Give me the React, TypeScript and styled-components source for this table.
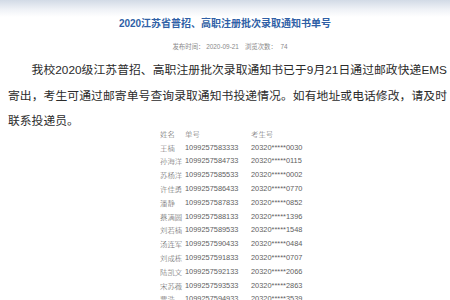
import React from 'react';
import styled, { createGlobalStyle } from 'styled-components';

const GlobalStyle = createGlobalStyle`
  html, body {
    margin: 0;
    padding: 0;
    background: #fff;
  }
  body {
    font-family: "Liberation Sans", "Noto Sans CJK SC", sans-serif;
    overflow: hidden;
  }
`;

const Page = styled.div`
  width: 450px;
  height: 300px;
  overflow: hidden;
  background: linear-gradient(to bottom, #d2dae6 0px, #eef1f6 9px, #ffffff 17px);
`;

const Title = styled.h1`
  margin: 0;
  padding-top: 17px;
  font-size: 10px;
  line-height: 14px;
  font-weight: bold;
  color: #2f5fa6;
  text-align: center;
`;

const Meta = styled.div`
  margin-top: 11px;
  font-size: 6.4px;
  line-height: 10px;
  color: #8a8a8a;
  text-align: center;
  padding-left: 10px;

  span + span {
    margin-left: 6px;
  }
`;

const Paragraph = styled.p`
  margin: 6px 0 0;
  padding: 0 3px 0 8px;
  font-size: 11.8px;
  line-height: 25.5px;
  color: #2b2b2b;
  text-indent: 2em;
  text-align: justify;
`;

const Table = styled.div`
  margin-top: -8px;
  padding-left: 160px;
  display: grid;
  grid-template-columns: 25px 66px auto;
  grid-auto-rows: 13.8px;
  align-items: center;
  font-size: 7.4px;
`;

const Cell = styled.div<{ $head?: boolean }>`
  white-space: nowrap;
  font-weight: 300;
  color: ${(p) => (p.$head ? '#6a6a6a' : '#5e5e5e')};
`;

const rows = [
  ['王楠', '1099257583333', '20320*****0030'],
  ['孙海洋', '1099257584733', '20320*****0115'],
  ['苏杨洋', '1099257585533', '20320*****0002'],
  ['许佳勇', '1099257586433', '20320*****0770'],
  ['潘静', '1099257587833', '20320*****0852'],
  ['蔡满圆', '1099257588133', '20320*****1396'],
  ['刘若楠', '1099257589533', '20320*****1548'],
  ['汤连军', '1099257590433', '20320*****0484'],
  ['刘成栋', '1099257591833', '20320*****0707'],
  ['陆凯文', '1099257592133', '20320*****2066'],
  ['宋苏薇', '1099257593533', '20320*****2863'],
  ['贾浩', '1099257594933', '20320*****3539'],
];

export default function App() {
  return (
    <>
      <GlobalStyle />
      <Page>
        <Title>2020江苏省普招、高职注册批次录取通知书单号</Title>
        <Meta>
          <span>发布时间：&nbsp;2020-09-21</span>
          <span>浏览次数：&nbsp;&nbsp;74</span>
        </Meta>
        <Paragraph>
          我校2020级江苏普招、高职注册批次录取通知书已于9月21日通过邮政快递EMS寄出，考生可通过邮寄单号查询录取通知书投递情况。如有地址或电话修改，请及时联系投递员。
        </Paragraph>
        <Table>
          <Cell $head>姓名</Cell>
          <Cell $head>单号</Cell>
          <Cell $head>考生号</Cell>
          {rows.map((r) => (
            <React.Fragment key={r[1]}>
              <Cell>{r[0]}</Cell>
              <Cell>{r[1]}</Cell>
              <Cell>{r[2]}</Cell>
            </React.Fragment>
          ))}
        </Table>
      </Page>
    </>
  );
}
